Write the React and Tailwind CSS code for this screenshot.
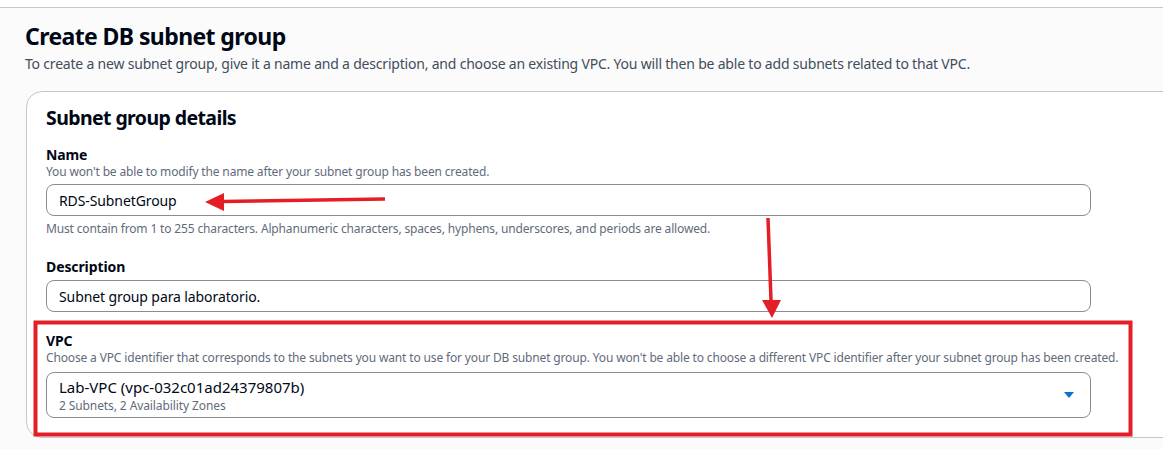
export default function App() {
    const font = { fontFamily: '"Noto Sans", "Open Sans", Arial, sans-serif' };

    return (
        <div
            className="relative w-[1163px] h-[449px] overflow-hidden bg-white text-[#000716]"
            style={font}
        >
            <div className="h-[7px] bg-white" />
            <div className="h-[442px] border-t border-[#c6c6cd] bg-[#fbfbfb] pl-[25px]">
                <h1 className="mt-[13px] text-[23px] leading-[30px] font-bold tracking-[-0.6px]">
                    Create DB subnet group
                </h1>
                <p className="mt-[3px] text-[14px] leading-[20px] text-[#414d5c] tracking-[-0.2px]">
                    To create a new subnet group, give it a name and a description, and choose an
                    existing VPC. You will then be able to add subnets related to that VPC.
                </p>

                <div className="mt-[17px] ml-[1px] w-[1200px] h-[347px] rounded-2xl border border-[#c6c6cd] bg-white pl-[19px] pt-[13px]">
                    <h2 className="text-[19.5px] leading-[26px] font-bold tracking-[-0.6px]">
                        Subnet group details
                    </h2>

                    <div className="mt-[14px]">
                        <label className="block text-[14px] leading-[20px] font-bold tracking-[-0.1px]">
                            Name
                        </label>
                        <p className="-mt-[1px] text-[12px] leading-[16px] text-[#5f6b7a] tracking-[-0.15px]">
                            You won't be able to modify the name after your subnet group has been created.
                        </p>
                        <div className="mt-[4px] w-[1045px] h-[32px] rounded-lg border border-[#8c8c94] px-[12px] flex items-center text-[14px] tracking-[-0.1px]">
                            RDS-SubnetGroup
                        </div>
                        <p className="mt-[5px] text-[12px] leading-[16px] text-[#5f6b7a] tracking-[-0.15px]">
                            Must contain from 1 to 255 characters. Alphanumeric characters, spaces,
                            hyphens, underscores, and periods are allowed.
                        </p>
                    </div>

                    <div className="mt-[20px]">
                        <label className="block text-[14px] leading-[20px] font-bold tracking-[-0.1px]">
                            Description
                        </label>
                        <div className="mt-[3px] w-[1045px] h-[32px] rounded-lg border border-[#8c8c94] px-[12px] flex items-center text-[14px] tracking-[-0.1px]">
                            Subnet group para laboratorio.
                        </div>
                    </div>

                    <div className="mt-[19px]">
                        <label className="block text-[14px] leading-[20px] font-bold tracking-[-0.1px]">
                            VPC
                        </label>
                        <p className="-mt-[1px] text-[12px] leading-[16px] text-[#5f6b7a] tracking-[-0.15px]">
                            Choose a VPC identifier that corresponds to the subnets you want to use for
                            your DB subnet group. You won't be able to choose a different VPC identifier
                            after your subnet group has been created.
                        </p>
                        <div className="mt-[6px] w-[1045px] h-[46px] rounded-lg border border-[#8c8c94] pl-[12px] pr-[15px] flex items-center justify-between">
                            <div className="pt-[1px]">
                                <div className="text-[15px] leading-[19px]">
                                    Lab-VPC (vpc-032c01ad24379807b)
                                </div>
                                <div className="text-[12px] leading-[17px] text-[#5f6b7a] tracking-[-0.1px]">
                                    2 Subnets, 2 Availability Zones
                                </div>
                            </div>
                            <svg width="12" height="8" viewBox="0 0 12 8">
                                <path d="M1 1h10L6 7z" fill="#0972d3" />
                            </svg>
                        </div>
                    </div>
                </div>
            </div>

            {/* red annotations drawn over the screenshot */}
            <svg
                className="absolute left-0 top-0 pointer-events-none"
                width="1163"
                height="449"
                viewBox="0 0 1163 449"
            >
                <rect x="35.5" y="322.5" width="1095" height="112" fill="none" stroke="#e41e26" strokeWidth="4" />
                <line x1="385" y1="199" x2="222" y2="201.5" stroke="#e41e26" strokeWidth="3.5" />
                <path d="M205 202 L224 193 L224 211 Z" fill="#e41e26" />
                <line x1="768" y1="218" x2="771" y2="300" stroke="#e41e26" strokeWidth="3.5" />
                <path d="M762 300 L781 300 L772 318 Z" fill="#e41e26" />
            </svg>
        </div>
    );
}
